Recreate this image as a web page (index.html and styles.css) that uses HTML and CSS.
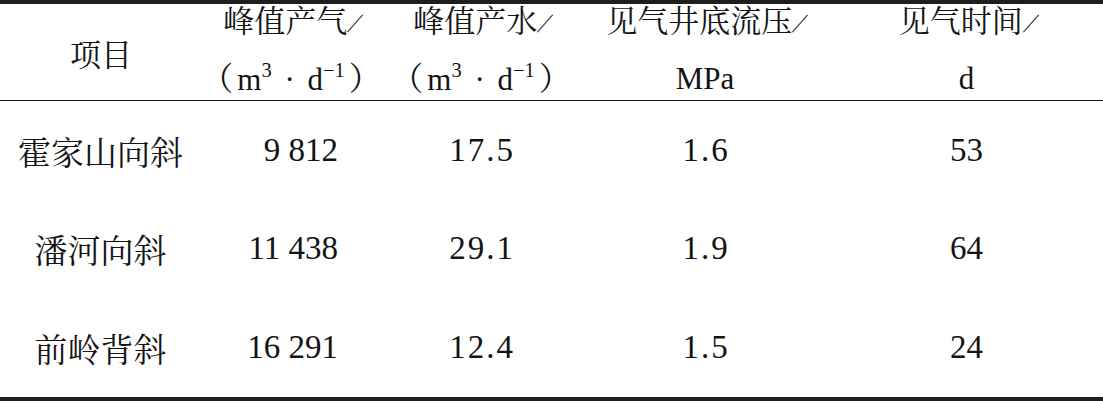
FILE: index.html
```html
<!DOCTYPE html>
<html lang="zh-CN">
<head>
<meta charset="utf-8">
<title>表</title>
<link rel="stylesheet" href="styles.css">
</head>
<body>
<table class="data">
  <colgroup>
    <col class="c1"><col class="c2"><col class="c3"><col class="c4"><col class="c5">
  </colgroup>
  <thead>
    <tr>
      <th class="item">项目</th>
      <th><div class="l1">峰值产气<span class="sl">/</span></div><div class="l2"><span class="fp op">（</span><span class="lat unit">m<sup>3</sup> · d<sup>−1</sup></span><span class="fp cl">）</span></div></th>
      <th><div class="l1">峰值产水<span class="sl">/</span></div><div class="l2"><span class="fp op">（</span><span class="lat unit">m<sup>3</sup> · d<sup>−1</sup></span><span class="fp cl">）</span></div></th>
      <th><div class="l1">见气井底流压<span class="sl">/</span></div><div class="l2 lat">MPa</div></th>
      <th><div class="l1">见气时间<span class="sl">/</span></div><div class="l2 lat">d</div></th>
    </tr>
  </thead>
  <tbody>
    <tr>
      <td class="name">霍家山向斜</td>
      <td class="gas lat">9 812</td>
      <td class="lat"><span class="dec">17.5</span></td>
      <td class="lat"><span class="dec">1.6</span></td>
      <td class="lat">53</td>
    </tr>
    <tr>
      <td class="name">潘河向斜</td>
      <td class="gas lat">11 438</td>
      <td class="lat"><span class="dec">29.1</span></td>
      <td class="lat"><span class="dec">1.9</span></td>
      <td class="lat">64</td>
    </tr>
    <tr>
      <td class="name">前岭背斜</td>
      <td class="gas lat">16 291</td>
      <td class="lat"><span class="dec">12.4</span></td>
      <td class="lat"><span class="dec">1.5</span></td>
      <td class="lat">24</td>
    </tr>
  </tbody>
</table>
</body>
</html>
```

FILE: styles.css
```css
html, body {
  margin: 0;
  padding: 0;
  background: #ffffff;
}

body {
  font-family: "Times New Roman", "Liberation Serif", Tinos, "Noto Serif CJK SC", "Noto Sans CJK SC", serif;
  color: #141414;
}

.lat {
  font-family: "Liberation Serif", "Times New Roman", Tinos, "DejaVu Serif", serif;
}

.data {
  width: 1103px;
  border-collapse: collapse;
  table-layout: fixed;
  border-top: 4px solid #1e1e1e;
  border-bottom: 4px solid #1e1e1e;
}

.c1 { width: 200px; }
.c2 { width: 182px; }
.c3 { width: 198px; }
.c4 { width: 250px; }
.c5 { width: 273px; }

thead th {
  font-weight: normal;
  font-size: 31px;
  padding: 0;
  text-align: center;
  vertical-align: middle;
  border-bottom: 1px solid #1e1e1e;
  height: 96px;
}

thead th.item {
  padding-left: 2px;
}

.l1 {
  line-height: 36px;
  height: 36px;
  white-space: nowrap;
}

.l2 {
  line-height: 42px;
  height: 42px;
  margin-top: 18px;
  white-space: nowrap;
}

.sl {
  display: inline-block;
  font-family: "Liberation Serif", serif;
  font-size: 0.85em;
  transform: skewX(-28deg);
  margin-left: 4px;
}

.fp {
  font-size: 1.05em;
}

.fp.op {
  margin-left: -10px;
  margin-right: 4px;
}

.fp.cl {
  margin-left: 4px;
  margin-right: -10px;
}

.unit {
  word-spacing: 5px;
}

sup {
  font-size: 0.66em;
  line-height: 0;
  vertical-align: 0.66em;
  word-spacing: 0;
}

tbody td {
  font-size: 33px;
  text-align: center;
  vertical-align: middle;
  padding: 0;
  height: 98.6px;
  white-space: nowrap;
}

tbody td.name {
  padding-left: 1px;
}

tbody td.gas {
  text-align: right;
  padding-right: 44px;
}

.dec {
  letter-spacing: 2px;
  margin-right: -2px;
}
```
